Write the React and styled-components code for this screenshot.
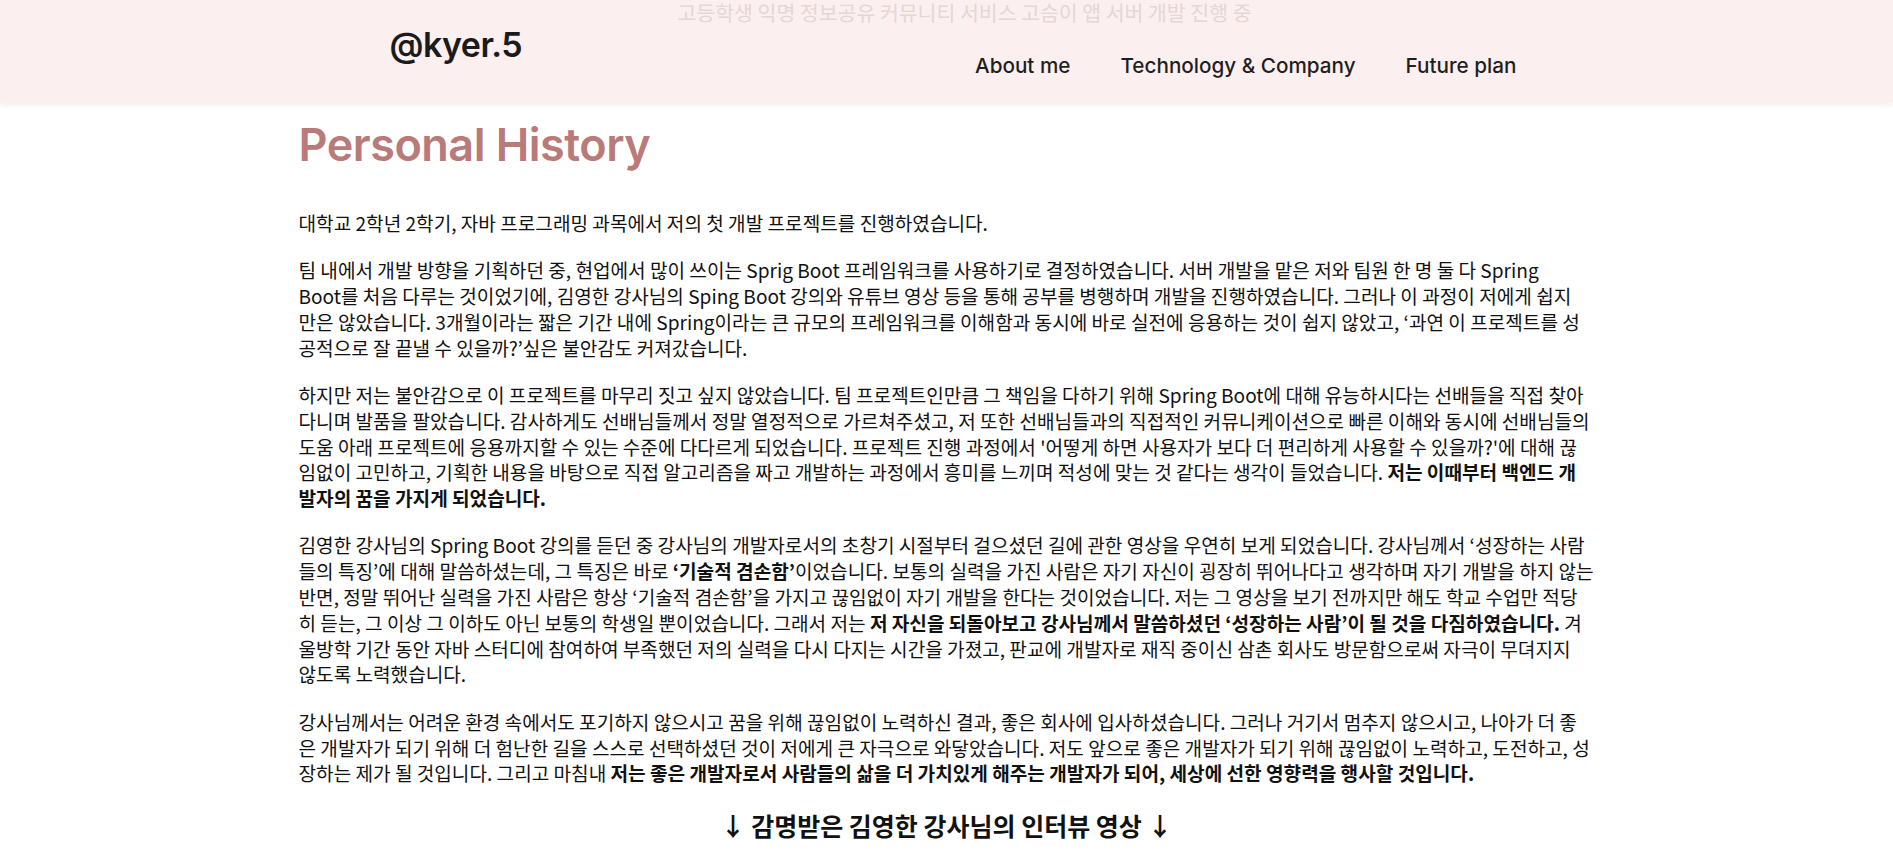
import styled, { createGlobalStyle } from "styled-components";

const GlobalStyle = createGlobalStyle`
  body {
    margin: 0;
    background: #ffffff;
    color: #111111;
    font-family: "Noto Sans CJK KR", "Noto Sans", sans-serif;
  }
`;

const Header = styled.header`
  background: #fcefef;
  height: 103px;
  box-shadow: 0 2px 6px rgba(0, 0, 0, 0.07);
  display: flex;
  flex-direction: column;
`;

const Ghost = styled.div`
  height: 24px;
  padding-left: 36px;
  text-align: center;
  font-size: 20.5px;
  line-height: 24px;
  color: #e6d6d6;
  overflow: hidden;
`;

const Bar = styled.div`
  width: 1140px;
  margin: 0 auto;
  display: flex;
  justify-content: space-between;
  align-items: flex-start;
`;

const Logo = styled.div`
  font-family: "Inter", "Noto Sans CJK KR", sans-serif;
  font-size: 34px;
  font-weight: 600;
  line-height: 41px;
  letter-spacing: -0.5px;
  color: #1b1b1b;
  padding-left: 13px;
`;

const Nav = styled.nav`
  display: flex;
  gap: 50px;
  padding-top: 29px;
`;

const NavLink = styled.a`
  font-family: "Inter", "Noto Sans CJK KR", sans-serif;
  font-size: 20.7px;
  font-weight: 500;
  line-height: 25px;
  color: #1f1f1f;
  text-decoration: none;
  cursor: pointer;
`;

const Main = styled.main`
  width: 1296px;
  margin: 0 auto;
  padding-bottom: 40px;
`;

const Title = styled.h1`
  margin: 14px 0 39px;
  font-family: "Inter", "Noto Sans CJK KR", sans-serif;
  font-size: 45px;
  font-weight: 600;
  line-height: 55px;
  letter-spacing: -0.5px;
  color: #b87b79;
`;

// lines are broken where the original page wrapped them
const Para = styled.p`
  margin: 0 0 21.5px;
  font-size: 19.1px;
  line-height: 25.8px;
  white-space: nowrap;

  b {
    font-weight: 700;
  }
`;

const Sub = styled.h3`
  margin: 21px 0 0;
  text-align: center;
  font-size: 25px;
  font-weight: 700;
  line-height: 32px;
`;

const links = ["About me", "Technology & Company", "Future plan"];

const story = [
  ["대학교 2학년 2학기, 자바 프로그래밍 과목에서 저의 첫 개발 프로젝트를 진행하였습니다."],
  [
    "팀 내에서 개발 방향을 기획하던 중, 현업에서 많이 쓰이는 Sprig Boot 프레임워크를 사용하기로 결정하였습니다. 서버 개발을 맡은 저와 팀원 한 명 둘 다 Spring",
    "Boot를 처음 다루는 것이었기에, 김영한 강사님의 Sping Boot 강의와 유튜브 영상 등을 통해 공부를 병행하며 개발을 진행하였습니다. 그러나 이 과정이 저에게 쉽지",
    "만은 않았습니다. 3개월이라는 짧은 기간 내에 Spring이라는 큰 규모의 프레임워크를 이해함과 동시에 바로 실전에 응용하는 것이 쉽지 않았고, ‘과연 이 프로젝트를 성",
    "공적으로 잘 끝낼 수 있을까?’싶은 불안감도 커져갔습니다.",
  ],
  [
    "하지만 저는 불안감으로 이 프로젝트를 마무리 짓고 싶지 않았습니다. 팀 프로젝트인만큼 그 책임을 다하기 위해 Spring Boot에 대해 유능하시다는 선배들을 직접 찾아",
    "다니며 발품을 팔았습니다. 감사하게도 선배님들께서 정말 열정적으로 가르쳐주셨고, 저 또한 선배님들과의 직접적인 커뮤니케이션으로 빠른 이해와 동시에 선배님들의",
    "도움 아래 프로젝트에 응용까지할 수 있는 수준에 다다르게 되었습니다. 프로젝트 진행 과정에서 '어떻게 하면 사용자가 보다 더 편리하게 사용할 수 있을까?'에 대해 끊",
    <>
      임없이 고민하고, 기획한 내용을 바탕으로 직접 알고리즘을 짜고 개발하는 과정에서 흥미를 느끼며 적성에 맞는 것 같다는 생각이 들었습니다. <b>저는 이때부터 백엔드 개</b>
    </>,
    <b>발자의 꿈을 가지게 되었습니다.</b>,
  ],
  [
    "김영한 강사님의 Spring Boot 강의를 듣던 중 강사님의 개발자로서의 초창기 시절부터 걸으셨던 길에 관한 영상을 우연히 보게 되었습니다. 강사님께서 ‘성장하는 사람",
    <>
      들의 특징’에 대해 말씀하셨는데, 그 특징은 바로 <b>‘기술적 겸손함’</b>이었습니다. 보통의 실력을 가진 사람은 자기 자신이 굉장히 뛰어나다고 생각하며 자기 개발을 하지 않는
    </>,
    "반면, 정말 뛰어난 실력을 가진 사람은 항상 ‘기술적 겸손함’을 가지고 끊임없이 자기 개발을 한다는 것이었습니다. 저는 그 영상을 보기 전까지만 해도 학교 수업만 적당",
    <>
      히 듣는, 그 이상 그 이하도 아닌 보통의 학생일 뿐이었습니다. 그래서 저는 <b>저 자신을 되돌아보고 강사님께서 말씀하셨던 ‘성장하는 사람’이 될 것을 다짐하였습니다.</b> 겨
    </>,
    "울방학 기간 동안 자바 스터디에 참여하여 부족했던 저의 실력을 다시 다지는 시간을 가졌고, 판교에 개발자로 재직 중이신 삼촌 회사도 방문함으로써 자극이 무뎌지지",
    "않도록 노력했습니다.",
  ],
  [
    "강사님께서는 어려운 환경 속에서도 포기하지 않으시고 꿈을 위해 끊임없이 노력하신 결과, 좋은 회사에 입사하셨습니다. 그러나 거기서 멈추지 않으시고, 나아가 더 좋",
    "은 개발자가 되기 위해 더 험난한 길을 스스로 선택하셨던 것이 저에게 큰 자극으로 와닿았습니다. 저도 앞으로 좋은 개발자가 되기 위해 끊임없이 노력하고, 도전하고, 성",
    <>
      장하는 제가 될 것입니다. 그리고 마침내 <b>저는 좋은 개발자로서 사람들의 삶을 더 가치있게 해주는 개발자가 되어, 세상에 선한 영향력을 행사할 것입니다.</b>
    </>,
  ],
];

function App() {
  return (
    <>
      <GlobalStyle />
      <Header>
        <Ghost>고등학생 익명 정보공유 커뮤니티 서비스 고슴이 앱 서버 개발 진행 중</Ghost>
        <Bar>
          <Logo>@kyer.5</Logo>
          <Nav>
            {links.map((l) => (
              <NavLink key={l}>{l}</NavLink>
            ))}
          </Nav>
        </Bar>
      </Header>
      <Main>
        <Title>Personal History</Title>
        {story.map((lines, i) => (
          <Para key={i}>
            {lines.map((line, j) => (
              <span key={j}>
                {j > 0 && <br />}
                {line}
              </span>
            ))}
          </Para>
        ))}
        <Sub>↓ 감명받은 김영한 강사님의 인터뷰 영상 ↓</Sub>
      </Main>
    </>
  );
}

export default App;
